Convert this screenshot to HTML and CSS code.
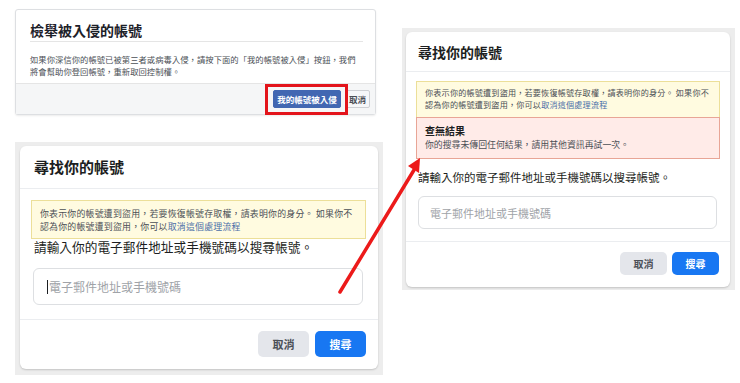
FILE: index.html
```html
<!DOCTYPE html>
<html lang="zh-Hant">
<head>
    <meta charset="UTF-8">
    <title>尋找你的帳號</title>
    <link rel="stylesheet" href="styles.css">
</head>
<body>
    <div class="page">
        <!-- Left column -->
        <div class="col-left">
            <!-- Old style report dialog -->
            <div class="report">
                <div class="report-head">檢舉被入侵的帳號</div>
                <div class="report-body">
                    如果你深信你的帳號已被第三者或病毒入侵，請按下面的「我的帳號被入侵」按鈕，我們將會幫助你登回帳號，重新取回控制權。
                </div>
                <div class="report-foot">
                    <span class="btn-old btn-old-blue">我的帳號被入侵<span class="mark"></span></span>
                    <span class="btn-old">取消</span>
                </div>
            </div>

            <!-- Find account dialog -->
            <div class="frame frame-big">
                <div class="card">
                    <div class="card-head">尋找你的帳號</div>
                    <div class="card-body">
                        <div class="notice">
                            你表示你的帳號遭到盜用，若要恢復帳號存取權，請表明你的身分。 如果你不認為你的帳號遭到盜用，你可以<a href="#">取消這個處理流程</a>
                        </div>
                        <div class="prompt">請輸入你的電子郵件地址或手機號碼以搜尋帳號。</div>
                        <div class="field"><span class="caret"></span>電子郵件地址或手機號碼</div>
                    </div>
                    <div class="card-foot">
                        <button class="btn btn-gray">取消</button>
                        <button class="btn btn-blue">搜尋</button>
                    </div>
                </div>
            </div>
        </div>

        <!-- Right column -->
        <div class="col-right">
            <div class="frame frame-small">
                <div class="card">
                    <div class="card-head">尋找你的帳號</div>
                    <div class="card-body">
                        <div class="notice">
                            你表示你的帳號遭到盜用，若要恢復帳號存取權，請表明你的身分。 如果你不認為你的帳號遭到盜用，你可以<a href="#">取消這個處理流程</a>
                        </div>
                        <div class="error">
                            <div class="error-title">查無結果</div>
                            <div>你的搜尋未傳回任何結果，請用其他資訊再試一次。</div>
                        </div>
                        <div class="prompt">請輸入你的電子郵件地址或手機號碼以搜尋帳號。</div>
                        <div class="field">電子郵件地址或手機號碼</div>
                    </div>
                    <div class="card-foot">
                        <button class="btn btn-gray">取消</button>
                        <button class="btn btn-blue">搜尋</button>
                    </div>
                </div>
            </div>
        </div>

        <!-- Annotation arrow -->
        <svg class="arrow" width="740" height="383" viewBox="0 0 740 383">
            <line x1="340" y1="292" x2="414" y2="170" stroke="#ec1a1a" stroke-width="3.5" stroke-linecap="round"/>
            <polygon points="420,158 419,173 408,166" fill="#ec1a1a"/>
        </svg>
    </div>
</body>
</html>
```

FILE: styles.css
```css
/* General Styles */
body {
    margin: 0;
    padding: 0;
    background-color: #ffffff;
    font-family: "Noto Sans CJK TC", "Noto Sans", sans-serif;
    color: #1c1e21;
}
.page {
    position: relative;
    display: flex;
    align-items: flex-start;
    width: 740px;
    height: 383px;
    padding: 9px 0 0 15px;
    box-sizing: border-box;
    overflow: hidden;
}
.col-left {
    display: flex;
    flex-direction: column;
    width: 368px;
}
.col-right {
    margin-left: 19px;
    margin-top: 19px;
    width: 333px;
}
/* Old report dialog */
.report {
    width: 361px;
    background-color: #ffffff;
    border: 1px solid #dddfe2;
    border-radius: 3px;
    box-shadow: 0 1px 2px rgba(0, 0, 0, 0.08);
    box-sizing: border-box;
}
.report-head {
    margin: 0 12px 0 14px;
    padding: 12px 0 2px;
    font-size: 14px;
    line-height: 17px;
    font-weight: bold;
    color: #1d2129;
    border-bottom: 1px solid #e5e5e5;
}
.report-body {
    margin: 11px 12px 0 14px;
    padding-bottom: 6px;
    font-size: 8.3px;
    line-height: 12px;
    letter-spacing: 0.05px;
    color: #4b4f56;
}
.report-foot {
    display: flex;
    justify-content: flex-end;
    align-items: center;
    height: 30px;
    padding-right: 5px;
    background-color: #f5f6f7;
    border-top: 1px solid #e5e5e5;
}
.btn-old {
    position: relative;
    display: inline-block;
    height: 18px;
    line-height: 16px;
    padding: 0 3px;
    margin-left: 4px;
    font-size: 8.5px;
    font-weight: bold;
    color: #4b4f56;
    background-color: #f6f7f9;
    border: 1px solid #ced0d4;
    border-radius: 2px;
    box-sizing: border-box;
}
.btn-old-blue {
    width: 68px;
    text-align: center;
    color: #ffffff;
    background-color: #4267b2;
    border-color: #4267b2;
}
/* Red highlight around the button */
.mark {
    position: absolute;
    left: -9px;
    right: -8px;
    top: -7px;
    bottom: -8px;
    border: 3px solid #e3141b;
    z-index: 2;
}
/* Screenshot frames */
.frame {
    background-color: #ededed;
    box-sizing: border-box;
}
.frame-big {
    margin-top: 27px;
    width: 368px;
    height: 233px;
    padding: 4px 5px 6px 5px;
}
.frame-small {
    width: 333px;
    height: 262px;
    padding: 4px 5px 3px 4px;
}
.card {
    background-color: #ffffff;
    border-radius: 6px;
    box-shadow: 0 1px 2px rgba(0, 0, 0, 0.18);
    height: 100%;
    box-sizing: border-box;
}
.card-head {
    padding: 11px 14px 11px;
    font-size: 15px;
    line-height: 20px;
    font-weight: bold;
    color: #1c1e21;
    border-bottom: 1px solid #ebedf0;
}
.card-body {
    padding: 11px 12px 0 11px;
}
.notice {
    padding: 6px 8px 5px;
    font-size: 8.9px;
    line-height: 13px;
    letter-spacing: 0.25px;
    color: #4b4f56;
    background-color: #fffbe0;
    border: 1px solid #ecdf99;
}
.notice a {
    display: inline-block;
    color: #4a6ea8;
    text-decoration: none;
}
.prompt {
    padding-left: 3px;
    font-size: 12.7px;
    line-height: 16px;
    color: #1c1e21;
}
.field {
    display: flex;
    align-items: center;
    height: 37px;
    margin: 13px 3px 14px 2px;
    padding-left: 13px;
    font-size: 12px;
    color: #a0a3a8;
    border: 1px solid #dddfe2;
    border-radius: 6px;
    box-sizing: border-box;
}
.caret {
    width: 1px;
    height: 14px;
    margin-right: 1px;
    background-color: #1c1e21;
}
.card-foot {
    display: flex;
    justify-content: flex-end;
    gap: 6px;
    padding: 11px 12px 11px;
    border-top: 1px solid #ebedf0;
}
.btn {
    width: 51px;
    height: 26px;
    padding: 0;
    font-family: inherit;
    font-size: 11px;
    font-weight: bold;
    border: none;
    border-radius: 5px;
}
.btn-gray {
    color: #4b4f56;
    background-color: #e4e6eb;
}
.btn-blue {
    color: #ffffff;
    background-color: #1877f2;
}
/* Smaller copy on the right */
.frame-small .card-head {
    padding: 11px 12px 10px;
    font-size: 14px;
    line-height: 18px;
}
.frame-small .card-body {
    padding: 9px 10px 0 10px;
}
.frame-small .notice {
    padding: 5px 8px 6px;
    font-size: 8.1px;
    line-height: 12px;
    letter-spacing: 0.2px;
    border-bottom: none;
}
.error {
    padding: 6px 8px 6px;
    font-size: 8.9px;
    line-height: 14px;
    color: #4b4f56;
    background-color: #ffebe8;
    border: 1px solid #e8a596;
}
.error-title {
    font-size: 10px;
    font-weight: bold;
    color: #1c1e21;
}
.frame-small .prompt {
    margin-top: 10px;
    padding-left: 2px;
    font-size: 11.5px;
}
.frame-small .field {
    height: 33px;
    margin: 11px 3px 12px 2px;
    padding-left: 11px;
    font-size: 11px;
}
.frame-small .card-foot {
    gap: 5px;
    padding: 10px 11px 11px;
}
.frame-small .btn {
    width: 47px;
    height: 23px;
    font-size: 10px;
}
/* Arrow overlay */
.arrow {
    position: absolute;
    left: 0;
    top: 0;
    pointer-events: none;
}
```
